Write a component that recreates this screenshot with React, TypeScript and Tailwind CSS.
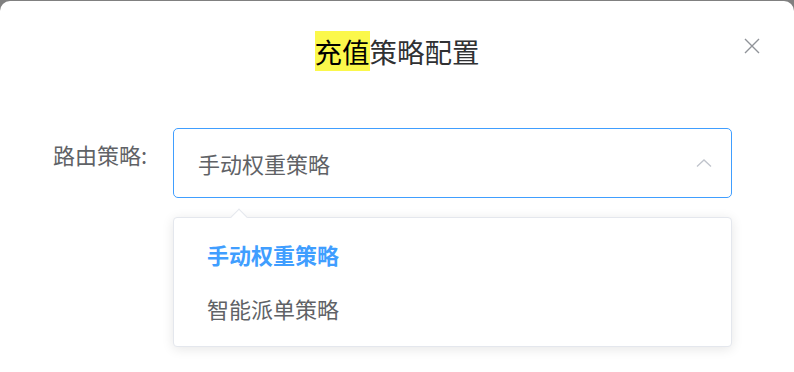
export default function App() {
  const font = { fontFamily: '"Noto Sans CJK SC", "Noto Sans", sans-serif' };
  return (
    <div className="w-[794px] h-[372px] overflow-hidden bg-[#808080]" style={font}>
      <div className="relative mt-px h-[371px] rounded-t-[10px] bg-white">
        {/* header */}
        <div className="pt-[35px] text-center text-[27.5px] leading-[31px] text-[#303133]">
          <span className="bg-[#fbf84b] text-black">充值</span>策略配置
        </div>
        <button className="absolute left-[744px] top-[37px] h-4 w-4 text-[#909399]" aria-label="close">
          <svg viewBox="0 0 16 16" className="h-4 w-4" fill="none" stroke="currentColor" strokeWidth={1.4}>
            <path d="M1 1l14 14M15 1L1 15" />
          </svg>
        </button>

        {/* form row */}
        <div className="mt-[61px] flex items-start">
          <label className="w-[173px] pl-[53px] pt-[11px] text-[22px] leading-[30px] text-[#606266]">路由策略:</label>
          <div className="flex h-[70px] w-[559px] items-center justify-between rounded-[5px] border border-[#409eff] pl-[24px] pr-[19px] text-[22px] text-[#606266]">
            <span>手动权重策略</span>
            <svg viewBox="0 0 16 8" className="h-2 w-4 text-[#c0c4cc]" fill="none" stroke="currentColor" strokeWidth={1.3}>
              <path d="M1 7.5L8 1l7 6.5" />
            </svg>
          </div>
        </div>

        {/* dropdown */}
        <div className="relative ml-[173px] mt-[19px] w-[559px] rounded-[4px] border border-[#e4e7ed] bg-white pt-[9px] pb-[11px] shadow-[0_2px_12px_rgba(0,0,0,0.1)]">
          <div className="absolute left-[59px] top-[-7px] h-3 w-3 rotate-45 border-l border-t border-[#e4e7ed] bg-white" />
          <div className="flex h-[54px] items-center px-[33px] text-[22px] font-semibold text-[#409eff]">手动权重策略</div>
          <div className="flex h-[54px] items-center px-[33px] text-[22px] text-[#606266]">智能派单策略</div>
        </div>
      </div>
    </div>
  );
}
